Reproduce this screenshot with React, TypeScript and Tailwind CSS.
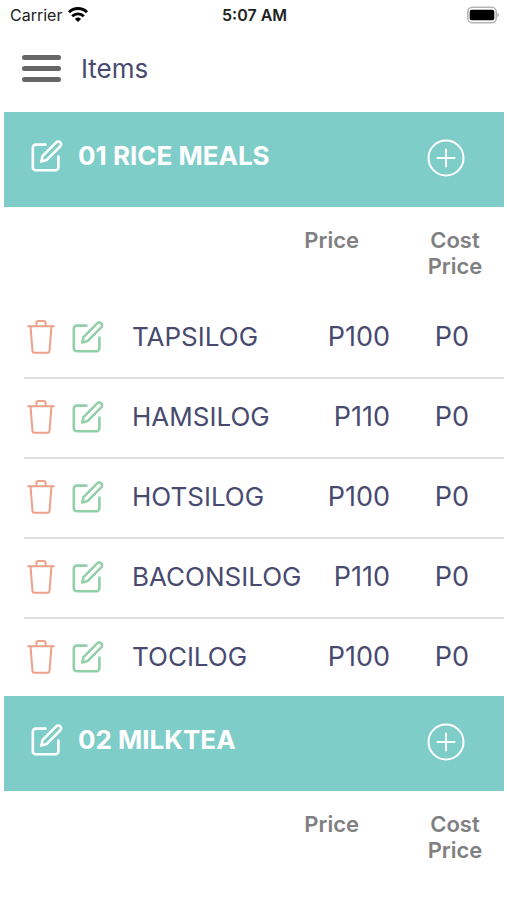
import React from "react";

type Item = { name: string; price: string; cost: string };
type Category = { title: string; items: Item[] };

const categories: Category[] = [
  {
    title: "01 RICE MEALS",
    items: [
      { name: "TAPSILOG", price: "P100", cost: "P0" },
      { name: "HAMSILOG", price: "P110", cost: "P0" },
      { name: "HOTSILOG", price: "P100", cost: "P0" },
      { name: "BACONSILOG", price: "P110", cost: "P0" },
      { name: "TOCILOG", price: "P100", cost: "P0" },
    ],
  },
  { title: "02 MILKTEA", items: [] },
];

function EditIcon() {
  return (
    <svg className="size-8" viewBox="0 0 32 32" fill="none" stroke="currentColor" strokeWidth="2.6" strokeLinecap="round" strokeLinejoin="round" aria-hidden="true">
      <path d="M14.5 4.6H4.8a3 3 0 0 0-3 3v19.6a3 3 0 0 0 3 3h19.6a3 3 0 0 0 3-3V16.5" />
      <path d="M25.2 2.4a2.8 2.8 0 0 1 4 4L15.5 20.1l-5.2 1.5 1.2-5.4Z" />
    </svg>
  );
}

function TrashIcon() {
  return (
    <svg className="h-9 w-7" viewBox="0 0 28 36" fill="none" stroke="currentColor" strokeWidth="2" strokeLinecap="round" strokeLinejoin="round" aria-hidden="true">
      <path d="M1.2 7.3h25.6M9.4 7.3V4a2 2 0 0 1 2-2h5.2a2 2 0 0 1 2 2v3.3" />
      <path d="m3.5 7.3 2 24.6a2 2 0 0 0 2 1.8h13a2 2 0 0 0 2-1.8l2-24.6" />
    </svg>
  );
}

function PlusIcon() {
  return (
    <svg className="size-10" viewBox="0 0 40 40" fill="none" stroke="currentColor" strokeWidth="2" strokeLinecap="round" aria-hidden="true">
      <circle cx="20" cy="20" r="17.5" />
      <path d="M20 11.5v17M11.5 20h17" />
    </svg>
  );
}

function StatusBar() {
  return (
    <div className="grid h-[30px] grid-cols-3 items-center pr-2 pl-[10px] text-base text-[#222]">
      <div className="flex items-center gap-[6px]">
        <span>Carrier</span>
        <svg className="h-4 w-5" viewBox="0 0 20 16" fill="none" stroke="#000" strokeWidth="2.9" aria-hidden="true">
          <path d="M1 5.3a12.7 12.7 0 0 1 18 0M4.2 9.3a8.2 8.2 0 0 1 11.6 0" />
          <path d="M10 15 6.9 11.9a4.4 4.4 0 0 1 6.2 0Z" fill="#000" stroke="none" />
        </svg>
      </div>
      <span className="text-center font-semibold">5:07 AM</span>
      <svg className="h-[18px] w-8 justify-self-end" viewBox="0 0 32 18" aria-hidden="true">
        <rect x="0.8" y="1.3" width="28.4" height="15.4" rx="4.5" fill="#fff" stroke="#b5b5b5" strokeWidth="1.6" />
        <rect x="2.7" y="3.8" width="24.6" height="10.4" rx="2" fill="#000" />
        <path d="M30.3 6.8c2 .6 2 3.8 0 4.4Z" fill="#aaa" />
      </svg>
    </div>
  );
}

function CategorySection({ title, items }: Category) {
  return (
    <section>
      <header className="flex h-[95px] items-start bg-[#7fcdc9] pt-6 pr-[38px] pl-[27px] text-white">
        <button type="button" aria-label={`Edit ${title}`} className="mt-1">
          <EditIcon />
        </button>
        <h2 className="ml-[15px] flex-1 text-[26px] leading-10 font-bold">{title}</h2>
        <button type="button" aria-label={`Add item to ${title}`} className="mt-[2px]">
          <PlusIcon />
        </button>
      </header>
      <table className="w-full table-fixed text-[27px] leading-10 text-[#484a70]">
        <colgroup>
          <col className="w-5" />
          <col className="w-[92px]" />
          <col />
          <col className="w-[94px]" />
          <col className="w-[114px]" />
        </colgroup>
        <thead>
          <tr className="h-[91px] align-top text-[22px] leading-[26px] text-[#808080]">
            <td colSpan={3} />
            <th scope="col" className="pt-5 pr-[31px] text-right font-semibold">Price</th>
            <th scope="col" className="pt-5 pl-4 text-center font-semibold">Cost<br />Price</th>
          </tr>
        </thead>
        <tbody>
          {items.map((item) => (
            <tr key={item.name} className="group h-20 last:h-[78px]">
              <td />
              <td className="border-b-2 border-[#e0e0e0] pb-[2px] group-last:border-0">
                <div className="flex items-center gap-[17px] pl-[3px]">
                  <button type="button" aria-label={`Delete ${item.name}`} className="text-[#eda08a]">
                    <TrashIcon />
                  </button>
                  <button type="button" aria-label={`Edit ${item.name}`} className="text-[#93cfa9]">
                    <EditIcon />
                  </button>
                </div>
              </td>
              <td className="border-b-2 border-[#e0e0e0] pb-[2px] pl-4 text-[26px] group-last:border-0">{item.name}</td>
              <td className="border-b-2 border-[#e0e0e0] pb-[2px] text-right group-last:border-0">{item.price}</td>
              <td className="border-b-2 border-[#e0e0e0] pr-[35px] pb-[2px] text-right group-last:border-0">{item.cost}</td>
            </tr>
          ))}
        </tbody>
      </table>
    </section>
  );
}

export default function App() {
  return (
    <div className="min-h-screen bg-white font-['Inter',sans-serif]">
      <StatusBar />
      <nav className="flex h-[82px] items-center gap-5 pb-[5px] pl-[22px]">
        <button type="button" aria-label="Open menu" className="flex w-[39px] flex-col gap-[6px]">
          <span className="h-[5px] rounded-sm bg-[#666]" />
          <span className="h-[5px] rounded-sm bg-[#666]" />
          <span className="h-[5px] rounded-sm bg-[#666]" />
        </button>
        <h1 className="text-[26px] text-[#484a70]">Items</h1>
      </nav>
      <main className="pr-[3px] pl-1">
        {categories.map((category) => (
          <CategorySection key={category.title} {...category} />
        ))}
      </main>
    </div>
  );
}
